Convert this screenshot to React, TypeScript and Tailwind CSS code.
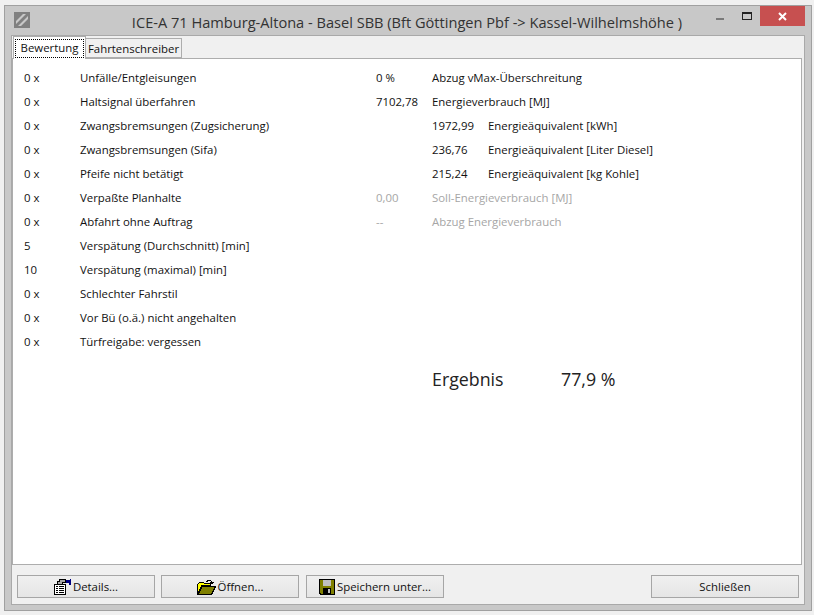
const leftRows = [
  ['0 x', 'Unfälle/Entgleisungen'],
  ['0 x', 'Haltsignal überfahren'],
  ['0 x', 'Zwangsbremsungen (Zugsicherung)'],
  ['0 x', 'Zwangsbremsungen (Sifa)'],
  ['0 x', 'Pfeife nicht betätigt'],
  ['0 x', 'Verpaßte Planhalte'],
  ['0 x', 'Abfahrt ohne Auftrag'],
  ['5', 'Verspätung (Durchschnitt) [min]'],
  ['10', 'Verspätung (maximal) [min]'],
  ['0 x', 'Schlechter Fahrstil'],
  ['0 x', 'Vor Bü (o.ä.) nicht angehalten'],
  ['0 x', 'Türfreigabe: vergessen'],
]

function DetailsIcon() {
  return (
    <svg width="17" height="16" viewBox="0 0 17 16" shapeRendering="crispEdges">
      <path d="M0.5 5.5h11v10H0.5z" fill="#fff" stroke="#000" />
      <path d="M2 7h2v1H2zM5 7h5v1H5zM2 9h2v1H2zM5 9h5v1H5zM2 11h2v1H2zM5 11h5v1H5zM2 13h2v1H2zM5 13h5v1H5z" fill="#000" />
      <path d="M3.5 5.5v-3h2v-2h6v3h-3v2z" fill="#a8a8a8" stroke="#000" />
      <path d="M12 1h4V0h1v6h-2V4h-3z" fill="#000080" />
    </svg>
  )
}

function OpenIcon() {
  return (
    <svg width="19" height="16" viewBox="0 0 19 16" shapeRendering="crispEdges">
      <path d="M0.5 5.5l2-2h4l1 1h6v2H5l-4 8z" fill="#ffff00" stroke="#000" />
      <path d="M1 15.5l4-8h13.5l-4 8z" fill="#808000" stroke="#000" />
      <path d="M9 3V2h1V1h4v1h1v1h2l-2.500 2.500L12 3h2V2h-3v1z" fill="#000" />
    </svg>
  )
}

function SaveIcon() {
  return (
    <svg width="16" height="16" viewBox="0 0 16 16" shapeRendering="crispEdges">
      <path d="M0 0h16v16H1l-1-1z" fill="#000" />
      <path d="M1 1h14v14H2l-1-1z" fill="#808000" />
      <path d="M4 1h8v6H4z" fill="#c0c0c0" />
      <path d="M4 9h8v6H4z" fill="#000" />
      <path d="M9 10h2v4H9z" fill="#c0c0c0" />
    </svg>
  )
}

function Btn({ w, icon, label }: { w: string; icon?: React.ReactNode; label: string }) {
  return (
    <div className={`${w} h-[23px] flex items-center justify-center gap-[2px] border border-[#a6a6a6] bg-gradient-to-b from-[#f0f0f0] to-[#e5e5e5] text-[#111]`}>
      {icon}
      <span className="pt-px">{label}</span>
    </div>
  )
}

export default function App() {
  return (
    <div className="w-[814px] h-[615px] overflow-hidden bg-[#f0f0f0] pt-[5px] pl-1 text-[11.4px] text-[#111] [font-family:'Open_Sans',sans-serif]">
      <div className="w-[808px] h-[606px] flex flex-col border border-[#a0a0a0] bg-[#c8c8c8]">
        {/* title bar */}
        <div className="h-[29px] shrink-0 flex items-start">
          <div className="ml-[9px] mt-[6px] w-4 h-4 bg-[#808080] flex items-center justify-center">
            <svg width="14" height="14" viewBox="0 0 14 14">
              <path d="M1 8L8 1h3L1 11zM13 6L6 13H3L13 3z" fill="#c8c8c8" />
            </svg>
          </div>
          <div className="flex-1 pl-[68px] text-center text-[14.6px] leading-5 mt-[6px] text-[#333]">
            ICE-A 71 Hamburg-Altona - Basel SBB (Bft Göttingen Pbf -&gt; Kassel-Wilhelmshöhe )
          </div>
          <div className="flex items-start mr-[6px]">
            <div className="w-2 h-[2px] mt-[12px] bg-[#7a7a7a]" />
            <div className="ml-[18px] mt-[6px] w-[10px] h-[8px] border border-t-2 border-[#222]" />
            <div className="ml-2 w-[45px] h-5 bg-[#c75050] flex items-center justify-center">
              <svg width="9" height="9" viewBox="0 0 9 9">
                <path d="M1 1l7 7M8 1L1 8" stroke="#fff" strokeWidth="2" />
              </svg>
            </div>
          </div>
        </div>

        {/* client area */}
        <div className="mx-[6px] mb-[5px] flex-1 flex flex-col border border-[#a9a9a9] bg-[#f0f0f0]">
          <div className="h-[22px] flex items-end shrink-0">
            <div className="h-[23px] w-[73px] ml-px border border-b-0 border-[#adadad] bg-white px-[1px] pt-[2px] z-10 -mb-px">
              <div className="h-[19px] leading-[15px] text-center border border-dotted border-black">Bewertung</div>
            </div>
            <div className="h-[20px] w-[96px] border border-l-0 border-[#adadad] bg-[#f0f0f0] text-center leading-[19px]">Fahrtenschreiber</div>
          </div>
          <div className="h-[507px] w-[790px] border border-[#adadad] bg-white pt-[7px] pl-[11px] flex">
            <div className="w-[352px] shrink-0">
              {leftRows.map(([value, label]) => (
                <div key={label} className="h-6 flex items-center">
                  <div className="w-14">{value}</div>
                  <div>{label}</div>
                </div>
              ))}
            </div>
            <div className="flex-1">
              <div className="h-6 flex items-center"><div className="w-14">0 %</div><div>Abzug vMax-Überschreitung</div></div>
              <div className="h-6 flex items-center"><div className="w-14">7102,78</div><div>Energieverbrauch [MJ]</div></div>
              <div className="h-6 flex items-center pl-14"><div className="w-14">1972,99</div><div>Energieäquivalent [kWh]</div></div>
              <div className="h-6 flex items-center pl-14"><div className="w-14">236,76</div><div>Energieäquivalent [Liter Diesel]</div></div>
              <div className="h-6 flex items-center pl-14"><div className="w-14">215,24</div><div>Energieäquivalent [kg Kohle]</div></div>
              <div className="h-6 flex items-center text-[#a6a6a6]"><div className="w-14">0,00</div><div>Soll-Energieverbrauch [MJ]</div></div>
              <div className="h-6 flex items-center text-[#a6a6a6]"><div className="w-14">--</div><div>Abzug Energieverbrauch</div></div>
              <div className="mt-[133px] pl-14 flex items-center text-[17.8px] leading-6 text-[#222]">
                <div className="w-[129px]">Ergebnis</div>
                <div>77,9 %</div>
              </div>
            </div>
          </div>
          <div className="flex-1 flex items-start pt-[10px] pl-[5px]">
            <Btn w="w-[138px]" icon={<DetailsIcon />} label="Details..." />
            <div className="w-[6px]" />
            <Btn w="w-[138px]" icon={<OpenIcon />} label="Öffnen..." />
            <div className="w-[7px]" />
            <Btn w="w-[138px]" icon={<SaveIcon />} label="Speichern unter..." />
            <div className="w-[207px]" />
            <Btn w="w-[148px]" label="Schließen" />
          </div>
        </div>
      </div>
    </div>
  )
}
